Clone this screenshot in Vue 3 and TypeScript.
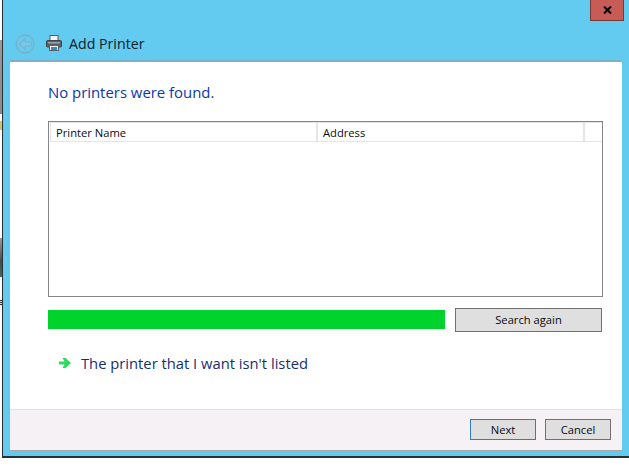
<script setup lang="ts">
const columns: { label: string; cls: string }[] = [
  { label: 'Printer Name', cls: 'col-name' },
  { label: 'Address', cls: 'col-address' },
]
</script>

<template>
  <div class="screen">
    <div class="desktop-strip">
      <span class="speck s0"></span>
      <span class="speck s1"></span>
      <span class="speck s2"></span>
      <span class="speck s3"></span>
    </div>
    <div class="window">
      <button class="close" type="button" aria-label="Close">
        <svg width="9" height="8" viewBox="0 0 9 8">
          <path d="M1 0.5 L8 7.5 M8 0.5 L1 7.5" stroke="#000" stroke-width="2" fill="none" />
        </svg>
      </button>
      <header class="titlebar">
        <span class="back">
          <svg width="20" height="20" viewBox="0 0 20 20">
            <circle cx="10" cy="10" r="9" fill="none" stroke="#7fafc4" stroke-width="1.3" />
            <path d="M4.5 10 L10 4.8 V8 H16.5 V12 H10 V15.2 Z" fill="#72cbec" stroke="#80b0c5" stroke-width="1.1" stroke-linejoin="round" />
          </svg>
        </span>
        <svg class="printer" width="16" height="16" viewBox="0 0 16 16">
          <rect x="4" y="0.5" width="8" height="5" fill="#f4f6f7" stroke="#5b5f63" />
          <rect x="0.5" y="5.5" width="15" height="6.5" rx="1" fill="#5a6268" stroke="#3e4449" />
          <rect x="2" y="7" width="12" height="1.5" fill="#9aa2a8" />
          <rect x="3.5" y="10.5" width="9" height="5" fill="#f7f9fa" stroke="#5b5f63" />
          <rect x="5" y="12" width="6" height="3" fill="#2e8cc9" />
        </svg>
        <h1 class="title">Add Printer</h1>
      </header>
      <main class="content">
        <div class="body">
          <h2 class="heading">No printers were found.</h2>
          <div class="list">
            <div class="list-head">
              <div v-for="c in columns" :key="c.label" class="col" :class="c.cls">{{ c.label }}</div>
            </div>
          </div>
          <div class="progress-row">
            <div class="progress"></div>
            <button class="btn search" type="button">Search again</button>
          </div>
          <a class="link" href="#" @click.prevent>
            <svg width="12" height="12" viewBox="0 0 12 12">
              <path d="M0 4.4 H5.6 L3.4 1 H6.6 L12 6 L6.6 11 H3.4 L5.6 7.6 H0 Z" fill="#2ddc5c" />
            </svg>
            <span>The printer that I want isn't listed</span>
          </a>
        </div>
        <footer class="footer">
          <button class="btn next" type="button">Next</button>
          <button class="btn cancel" type="button">Cancel</button>
        </footer>
      </main>
    </div>
  </div>
</template>

<style>
html, body { margin: 0; background: #fff; }
</style>

<style scoped>
.screen {
  width: 629px;
  height: 467px;
  display: flex;
  align-items: flex-start;
  overflow: hidden;
  background: #fff;
  font-family: "Open Sans", "Noto Sans", sans-serif;
}
.desktop-strip {
  width: 2px;
  height: 458px;
  flex: none;
  position: relative;
  background: #fff;
}
.speck { position: absolute; left: 0; width: 2px; }
.s0 { top: 40px; height: 74px; background: linear-gradient(#9a9a9a, #8a8a8a); }
.s1 { top: 121px; height: 9px; background: #d8c070; }
.s2 { top: 238px; height: 39px; background: linear-gradient(#9a9a9a, #4a4a4a 60%, #3d6a66); }
.s3 { top: 300px; height: 6px; background: repeating-linear-gradient(#333 0 1px, #ddd 1px 2px); }
.window {
  position: relative;
  flex: 1;
  height: 458px;
  box-sizing: border-box;
  background: #63caf0;
  border-left: 1px solid #2a2f33;
  border-bottom: 2px solid #2a2f33;
  padding: 0 7px 5px 7px;
  display: flex;
  flex-direction: column;
}
.close {
  position: absolute;
  top: 0;
  right: 5px;
  width: 34px;
  height: 21px;
  box-sizing: border-box;
  padding: 0;
  background: #c75b55;
  border: 1px solid #7a3a36;
  border-top: 0;
  display: flex;
  align-items: center;
  justify-content: center;
}
.titlebar {
  height: 60px;
  flex: none;
  box-sizing: border-box;
  padding: 34px 0 0 5px;
  display: flex;
  align-items: flex-start;
}
.back { width: 20px; height: 20px; display: block; }
.printer { margin: 1px 0 0 11px; }
.title {
  margin: 0 0 0 7px;
  font-size: 14.2px;
  font-weight: 400;
  line-height: 20px;
  color: #10202a;
}
.content {
  flex: 1;
  min-height: 0;
  display: flex;
  flex-direction: column;
  background: #fff;
  border-top: 2px solid #7fb0c6;
  border-bottom: 1px solid #a9a9ad;
}
.body {
  flex: 1;
  padding: 20px 19px 0 38px;
}
.heading {
  margin: 0;
  font-size: 14.9px;
  font-weight: 400;
  line-height: 20px;
  color: #0b38a8;
}
.list {
  margin-top: 19px;
  height: 176px;
  box-sizing: border-box;
  border: 1px solid #85858f;
}
.list-head {
  display: flex;
  height: 20px;
  box-sizing: border-box;
  margin-left: 1px;
  border: 1px solid #e5e5e5;
  border-right: 0;
}
.col {
  box-sizing: border-box;
  height: 18px;
  padding-top: 1px;
  font-size: 11.2px;
  line-height: 18px;
  color: #0a0a14;
  padding-left: 5px;
  border-right: 2px solid #e5e5e5;
}
.col-name { width: 267px; }
.col-address { width: 267px; }
.progress-row {
  margin-top: 11px;
  display: flex;
  align-items: flex-start;
}
.progress {
  width: 397px;
  height: 19px;
  margin-top: 2px;
  background: #00d42c;
}
.btn {
  box-sizing: border-box;
  padding: 0;
  background: #dfdfdf;
  border: 1px solid #707070;
  font-family: inherit;
  font-size: 11.2px;
  color: #0a0a14;
  outline: 0;
}
.search {
  width: 147px;
  height: 24px;
  margin-left: 10px;
  padding-bottom: 2px;
}
.link {
  margin: 21px 0 0 11px;
  display: flex;
  align-items: center;
  gap: 10px;
  color: #14306e;
  font-size: 14.75px;
  line-height: 20px;
  text-decoration: none;
}
.footer {
  height: 41px;
  flex: none;
  box-sizing: border-box;
  background: #f6f1f5;
  border-top: 1px solid #e2e2e2;
  padding: 9px 11px 0 0;
  display: flex;
  justify-content: flex-end;
  align-items: flex-start;
  gap: 9px;
}
.next, .cancel { width: 66px; height: 21px; }
.next { border-color: #2f7fbd; }
</style>
